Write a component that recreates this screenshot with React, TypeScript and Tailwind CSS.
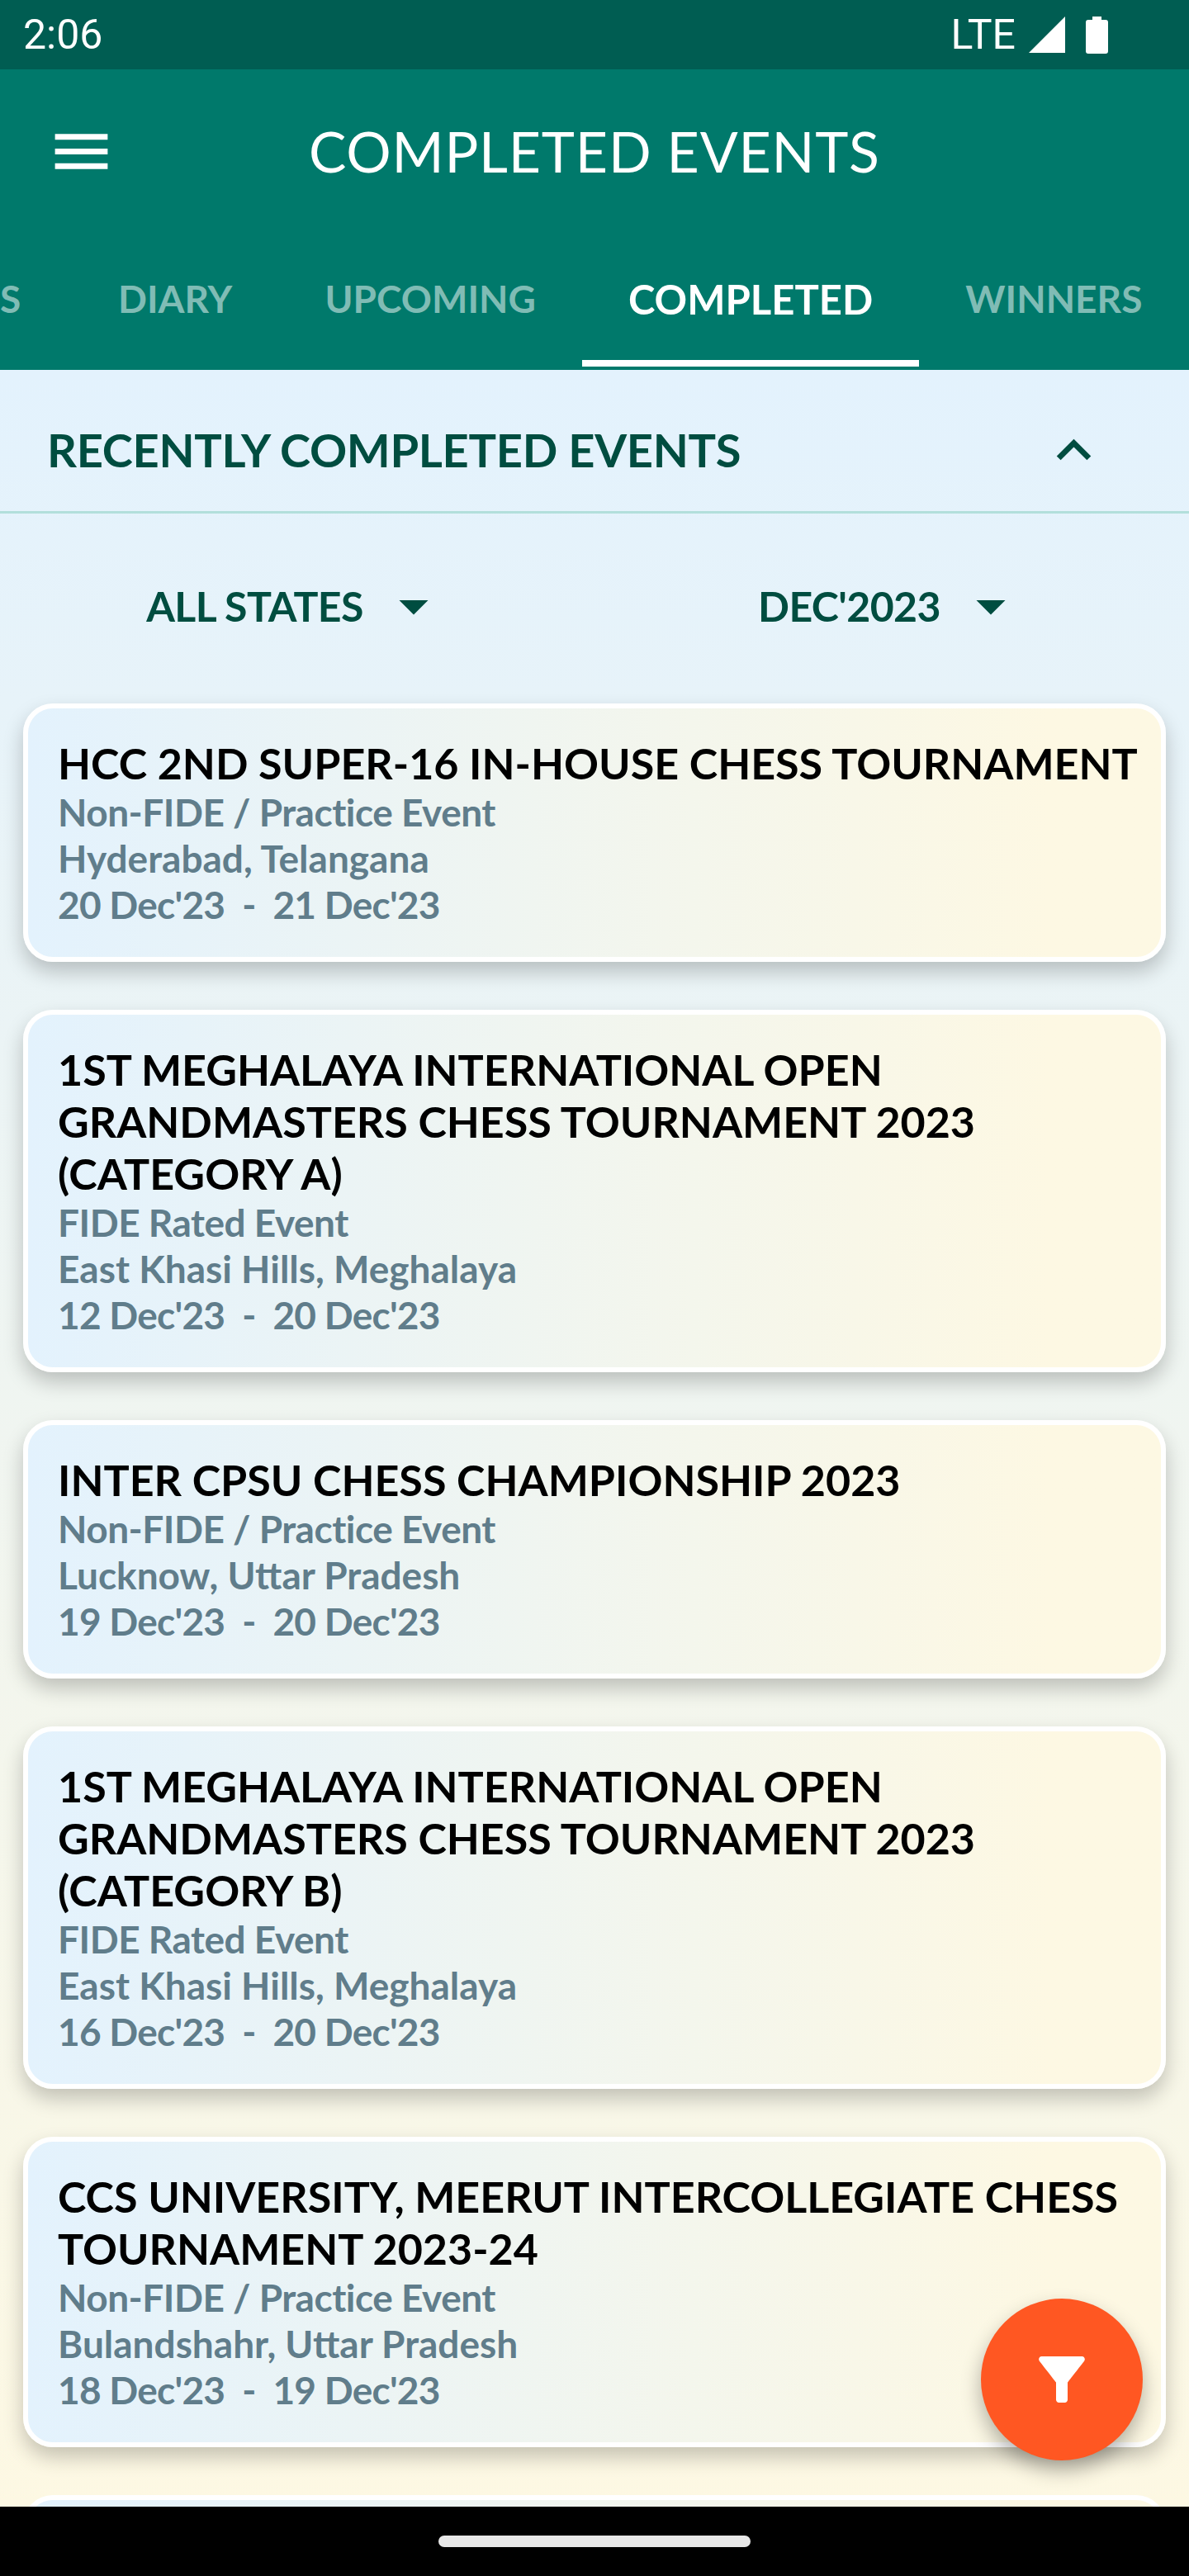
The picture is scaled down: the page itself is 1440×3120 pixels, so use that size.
const TABS = [
  { label: "DIARY", active: false },
  { label: "UPCOMING", active: false },
  { label: "COMPLETED", active: true },
  { label: "WINNERS", active: false },
];

const EVENTS = [
  {
    title: ["HCC 2ND SUPER-16 IN-HOUSE CHESS TOURNAMENT"],
    kind: "Non-FIDE / Practice Event",
    place: "Hyderabad, Telangana",
    dates: "20 Dec'23  -  21 Dec'23",
  },
  {
    title: ["1ST MEGHALAYA INTERNATIONAL OPEN", "GRANDMASTERS CHESS TOURNAMENT 2023", "(CATEGORY A)"],
    kind: "FIDE Rated Event",
    place: "East Khasi Hills, Meghalaya",
    dates: "12 Dec'23  -  20 Dec'23",
  },
  {
    title: ["INTER CPSU CHESS CHAMPIONSHIP 2023"],
    kind: "Non-FIDE / Practice Event",
    place: "Lucknow, Uttar Pradesh",
    dates: "19 Dec'23  -  20 Dec'23",
  },
  {
    title: ["1ST MEGHALAYA INTERNATIONAL OPEN", "GRANDMASTERS CHESS TOURNAMENT 2023", "(CATEGORY B)"],
    kind: "FIDE Rated Event",
    place: "East Khasi Hills, Meghalaya",
    dates: "16 Dec'23  -  20 Dec'23",
  },
  {
    title: ["CCS UNIVERSITY, MEERUT INTERCOLLEGIATE CHESS", "TOURNAMENT 2023-24"],
    kind: "Non-FIDE / Practice Event",
    place: "Bulandshahr, Uttar Pradesh",
    dates: "18 Dec'23  -  19 Dec'23",
  },
];

function Icon({ d, className }: { d: string; className: string }) {
  return (
    <svg viewBox="0 0 24 24" fill="currentColor" className={className} aria-hidden>
      <path d={d} />
    </svg>
  );
}

function Dropdown({ label }: { label: string }) {
  return (
    <div className="flex w-1/2 items-center justify-center">
      <span className="text-[50px] leading-[70px] font-bold tracking-[-0.6px] text-[#004d40]">{label}</span>
      <Icon d="M7 10l5 5 5-5z" className="ml-[19px] size-[84px] text-[#004d40]" />
    </div>
  );
}

function EventCard({ title, kind, place, dates }: (typeof EVENTS)[number]) {
  return (
    <div className="mb-[58px] rounded-[36px] border-[6px] border-white bg-gradient-to-r from-[#e3f2fd] to-[#fdf8e3] to-90% px-[36px] py-[35px] shadow-[0_12px_24px_rgba(0,0,0,0.22)]">
      <div className="text-[52px] leading-[63px] font-bold whitespace-nowrap text-black">
        {title.map((line) => (
          <div key={line}>{line}</div>
        ))}
      </div>
      <div className="text-[46px] leading-[56px] font-bold whitespace-pre text-[#607d8b]">
        <div className="tracking-[-0.5px]">{kind}</div>
        <div>{place}</div>
        <div className="tracking-[-0.75px]">{dates}</div>
      </div>
    </div>
  );
}

export default function App() {
  return (
    <div className="relative flex h-[3120px] w-[1440px] flex-col overflow-hidden bg-black font-['Lato',sans-serif]">
      <div className="flex h-[84px] shrink-0 items-center justify-between bg-[#005d52] pr-[98px] pl-[28px] font-['Roboto',sans-serif] text-white">
        <span className="text-[50px]">2:06</span>
        <div className="flex items-center">
          <span className="text-[50px]">LTE</span>
          <svg viewBox="0 0 44 44" fill="currentColor" className="ml-[16px] size-[44px]" aria-hidden>
            <path d="M44 0v44H0z" />
          </svg>
          <svg viewBox="0 0 27 45" fill="currentColor" className="ml-[25px] h-[45px] w-[27px]" aria-hidden>
            <path d="M8 0h11v4h5a3 3 0 0 1 3 3v35a3 3 0 0 1-3 3H3a3 3 0 0 1-3-3V7a3 3 0 0 1 3-3h5z" />
          </svg>
        </div>
      </div>

      <header className="h-[364px] shrink-0 bg-[#00796b] text-white">
        <div className="flex h-[198px] items-center">
          <Icon
            d="M3 18h18v-2H3v2zm0-5h18v-2H3v2zm0-7v2h18V6H3z"
            className="ml-[56px] size-[85px]"
          />
          <h1 className="ml-[233px] text-[68px] leading-none font-normal tracking-[0.8px] whitespace-nowrap">
            COMPLETED EVENTS
          </h1>
        </div>
        <div className="flex h-[166px] overflow-hidden">
          <div className="flex w-[87px] shrink-0 pt-[50px] text-[46px] leading-[60px] font-bold text-[#80bcb5]">S</div>
          {TABS.map((tab) => (
            <div
              key={tab.label}
              className={`flex h-[162px] shrink-0 justify-center border-b-[8px] px-[56px] pt-[50px] leading-[60px] font-bold ${
                tab.active ? "border-white text-[49px] text-white" : "border-transparent text-[46px] text-[#80bcb5]"
              }`}
            >
              {tab.label}
            </div>
          ))}
        </div>
      </header>

      <main className="min-h-0 flex-1 overflow-hidden bg-gradient-to-b from-[#e3f2fd] to-[#fdf8e3]">
        <div className="flex h-[174px] items-center justify-between border-b-[3px] border-[#b2dfdb] pt-[23px] pr-[98px] pl-[57px]">
          <h2 className="text-[56px] leading-[66px] font-bold tracking-[-0.3px] text-[#004d40]">
            RECENTLY COMPLETED EVENTS
          </h2>
          <Icon d="M12 8l-6 6 1.41 1.41L12 10.83l4.59 4.58L18 14z" className="size-[83px] text-[#004d40]" />
        </div>
        <div className="flex h-[226px] items-center pb-[2px]">
          <Dropdown label="ALL STATES" />
          <Dropdown label="DEC'2023" />
        </div>
        <div className="px-[28px] pt-[4px]">
          {EVENTS.map((event) => (
            <EventCard key={event.dates} {...event} />
          ))}
          <div className="h-[60px] rounded-t-[36px] border-[6px] border-white bg-gradient-to-r from-[#e3f2fd] to-[#fdf8e3] to-90%" />
        </div>
      </main>

      <div className="flex h-[84px] shrink-0 items-center justify-center bg-black">
        <div className="h-[14px] w-[378px] rounded-full bg-[#e8e8e8]" />
      </div>

      <button className="absolute top-[2784px] left-[1188px] flex size-[196px] items-center justify-center rounded-full bg-[#ff5722] text-white shadow-[0_12px_24px_rgba(0,0,0,0.3)]">
        <Icon
          d="M4.25 5.61C6.27 8.2 10 13 10 13v6c0 .55.45 1 1 1h2c.55 0 1-.45 1-1v-6s3.72-4.8 5.74-7.39C20.25 4.95 19.78 4 18.95 4H5.04c-.83 0-1.3.95-.79 1.61z"
          className="size-[84px]"
        />
      </button>
    </div>
  );
}
